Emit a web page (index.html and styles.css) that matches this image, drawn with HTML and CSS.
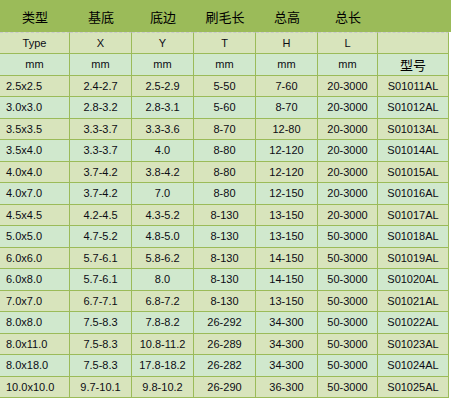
FILE: index.html
```html
<!DOCTYPE html>
<html lang="zh">
<head>
<meta charset="utf-8">
<title>规格表</title>
<link rel="stylesheet" href="styles.css">
</head>
<body>
<div class="sheet">
  <div class="head">
    <div class="h">类型</div>
    <div class="h">基底</div>
    <div class="h">底边</div>
    <div class="h">刷毛长</div>
    <div class="h">总高</div>
    <div class="h">总长</div>
    <div class="h"></div>
  </div>
  <div class="grid">
    <div class="row tan first">
      <div class="c">Type</div><div class="c">X</div><div class="c">Y</div><div class="c">T</div><div class="c">H</div><div class="c">L</div><div class="c"></div>
    </div>
    <div class="row mint">
      <div class="c">mm</div><div class="c">mm</div><div class="c">mm</div><div class="c">mm</div><div class="c">mm</div><div class="c">mm</div><div class="c cjk">型号</div>
    </div>
    <div class="row tan">
      <div class="c lead">2.5x2.5</div><div class="c">2.4-2.7</div><div class="c">2.5-2.9</div><div class="c">5-50</div><div class="c">7-60</div><div class="c">20-3000</div><div class="c">S01011AL</div>
    </div>
    <div class="row mint">
      <div class="c lead">3.0x3.0</div><div class="c">2.8-3.2</div><div class="c">2.8-3.1</div><div class="c">5-60</div><div class="c">8-70</div><div class="c">20-3000</div><div class="c">S01012AL</div>
    </div>
    <div class="row tan">
      <div class="c lead">3.5x3.5</div><div class="c">3.3-3.7</div><div class="c">3.3-3.6</div><div class="c">8-70</div><div class="c">12-80</div><div class="c">20-3000</div><div class="c">S01013AL</div>
    </div>
    <div class="row mint">
      <div class="c lead">3.5x4.0</div><div class="c">3.3-3.7</div><div class="c">4.0</div><div class="c">8-80</div><div class="c">12-120</div><div class="c">20-3000</div><div class="c">S01014AL</div>
    </div>
    <div class="row tan">
      <div class="c lead">4.0x4.0</div><div class="c">3.7-4.2</div><div class="c">3.8-4.2</div><div class="c">8-80</div><div class="c">12-120</div><div class="c">20-3000</div><div class="c">S01015AL</div>
    </div>
    <div class="row mint">
      <div class="c lead">4.0x7.0</div><div class="c">3.7-4.2</div><div class="c">7.0</div><div class="c">8-80</div><div class="c">12-150</div><div class="c">20-3000</div><div class="c">S01016AL</div>
    </div>
    <div class="row tan">
      <div class="c lead">4.5x4.5</div><div class="c">4.2-4.5</div><div class="c">4.3-5.2</div><div class="c">8-130</div><div class="c">13-150</div><div class="c">20-3000</div><div class="c">S01017AL</div>
    </div>
    <div class="row mint">
      <div class="c lead">5.0x5.0</div><div class="c">4.7-5.2</div><div class="c">4.8-5.0</div><div class="c">8-130</div><div class="c">13-150</div><div class="c">50-3000</div><div class="c">S01018AL</div>
    </div>
    <div class="row tan">
      <div class="c lead">6.0x6.0</div><div class="c">5.7-6.1</div><div class="c">5.8-6.2</div><div class="c">8-130</div><div class="c">14-150</div><div class="c">50-3000</div><div class="c">S01019AL</div>
    </div>
    <div class="row mint">
      <div class="c lead">6.0x8.0</div><div class="c">5.7-6.1</div><div class="c">8.0</div><div class="c">8-130</div><div class="c">14-150</div><div class="c">50-3000</div><div class="c">S01020AL</div>
    </div>
    <div class="row tan">
      <div class="c lead">7.0x7.0</div><div class="c">6.7-7.1</div><div class="c">6.8-7.2</div><div class="c">8-130</div><div class="c">13-150</div><div class="c">50-3000</div><div class="c">S01021AL</div>
    </div>
    <div class="row mint">
      <div class="c lead">8.0x8.0</div><div class="c">7.5-8.3</div><div class="c">7.8-8.2</div><div class="c">26-292</div><div class="c">34-300</div><div class="c">50-3000</div><div class="c">S01022AL</div>
    </div>
    <div class="row tan">
      <div class="c lead">8.0x11.0</div><div class="c">7.5-8.3</div><div class="c">10.8-11.2</div><div class="c">26-289</div><div class="c">34-300</div><div class="c">50-3000</div><div class="c">S01023AL</div>
    </div>
    <div class="row mint">
      <div class="c lead">8.0x18.0</div><div class="c">7.5-8.3</div><div class="c">17.8-18.2</div><div class="c">26-282</div><div class="c">34-300</div><div class="c">50-3000</div><div class="c">S01024AL</div>
    </div>
    <div class="row tan">
      <div class="c lead">10.0x10.0</div><div class="c">9.7-10.1</div><div class="c">9.8-10.2</div><div class="c">26-290</div><div class="c">36-300</div><div class="c">50-3000</div><div class="c">S01025AL</div>
    </div>
  </div>
</div>
</body>
</html>
```

FILE: styles.css
```css
html, body {
  margin: 0;
  padding: 0;
  background: #ffffff;
}

.sheet {
  width: 451px;
}

.head {
  display: grid;
  grid-template-columns: 70px 62px 62px 62px 62px 60px 73px;
  height: 32px;
  background: #9bbb59;
}

.h {
  display: flex;
  align-items: center;
  justify-content: center;
  font-family: "Noto Sans CJK SC", sans-serif;
  font-size: 13px;
  color: #000000;
}

.grid {
  display: grid;
  width: 449px;
  grid-template-columns: 70px 62px 62px 62px 62px 60px 71px;
  grid-template-rows: 22px repeat(16, 21.5px);
  font-family: "Liberation Sans", Arial, sans-serif;
  font-size: 11px;
  color: #0c0c14;
}

.row {
  display: contents;
}

.c {
  box-sizing: border-box;
  display: flex;
  align-items: center;
  justify-content: center;
  border-right: 1px solid #9bbb59;
  border-bottom: 1px solid #9bbb59;
  white-space: nowrap;
}

.first .c {
  border-top: 1px dashed #c9c9c9;
}

.tan .c {
  background: #d8e4bc;
}

.mint .c {
  background: #d0e8cd;
}

.lead {
  justify-content: flex-start;
  padding-left: 6px;
}

.cjk {
  font-family: "Noto Sans CJK SC", sans-serif;
  font-size: 13px;
  color: #000000;
}
```
